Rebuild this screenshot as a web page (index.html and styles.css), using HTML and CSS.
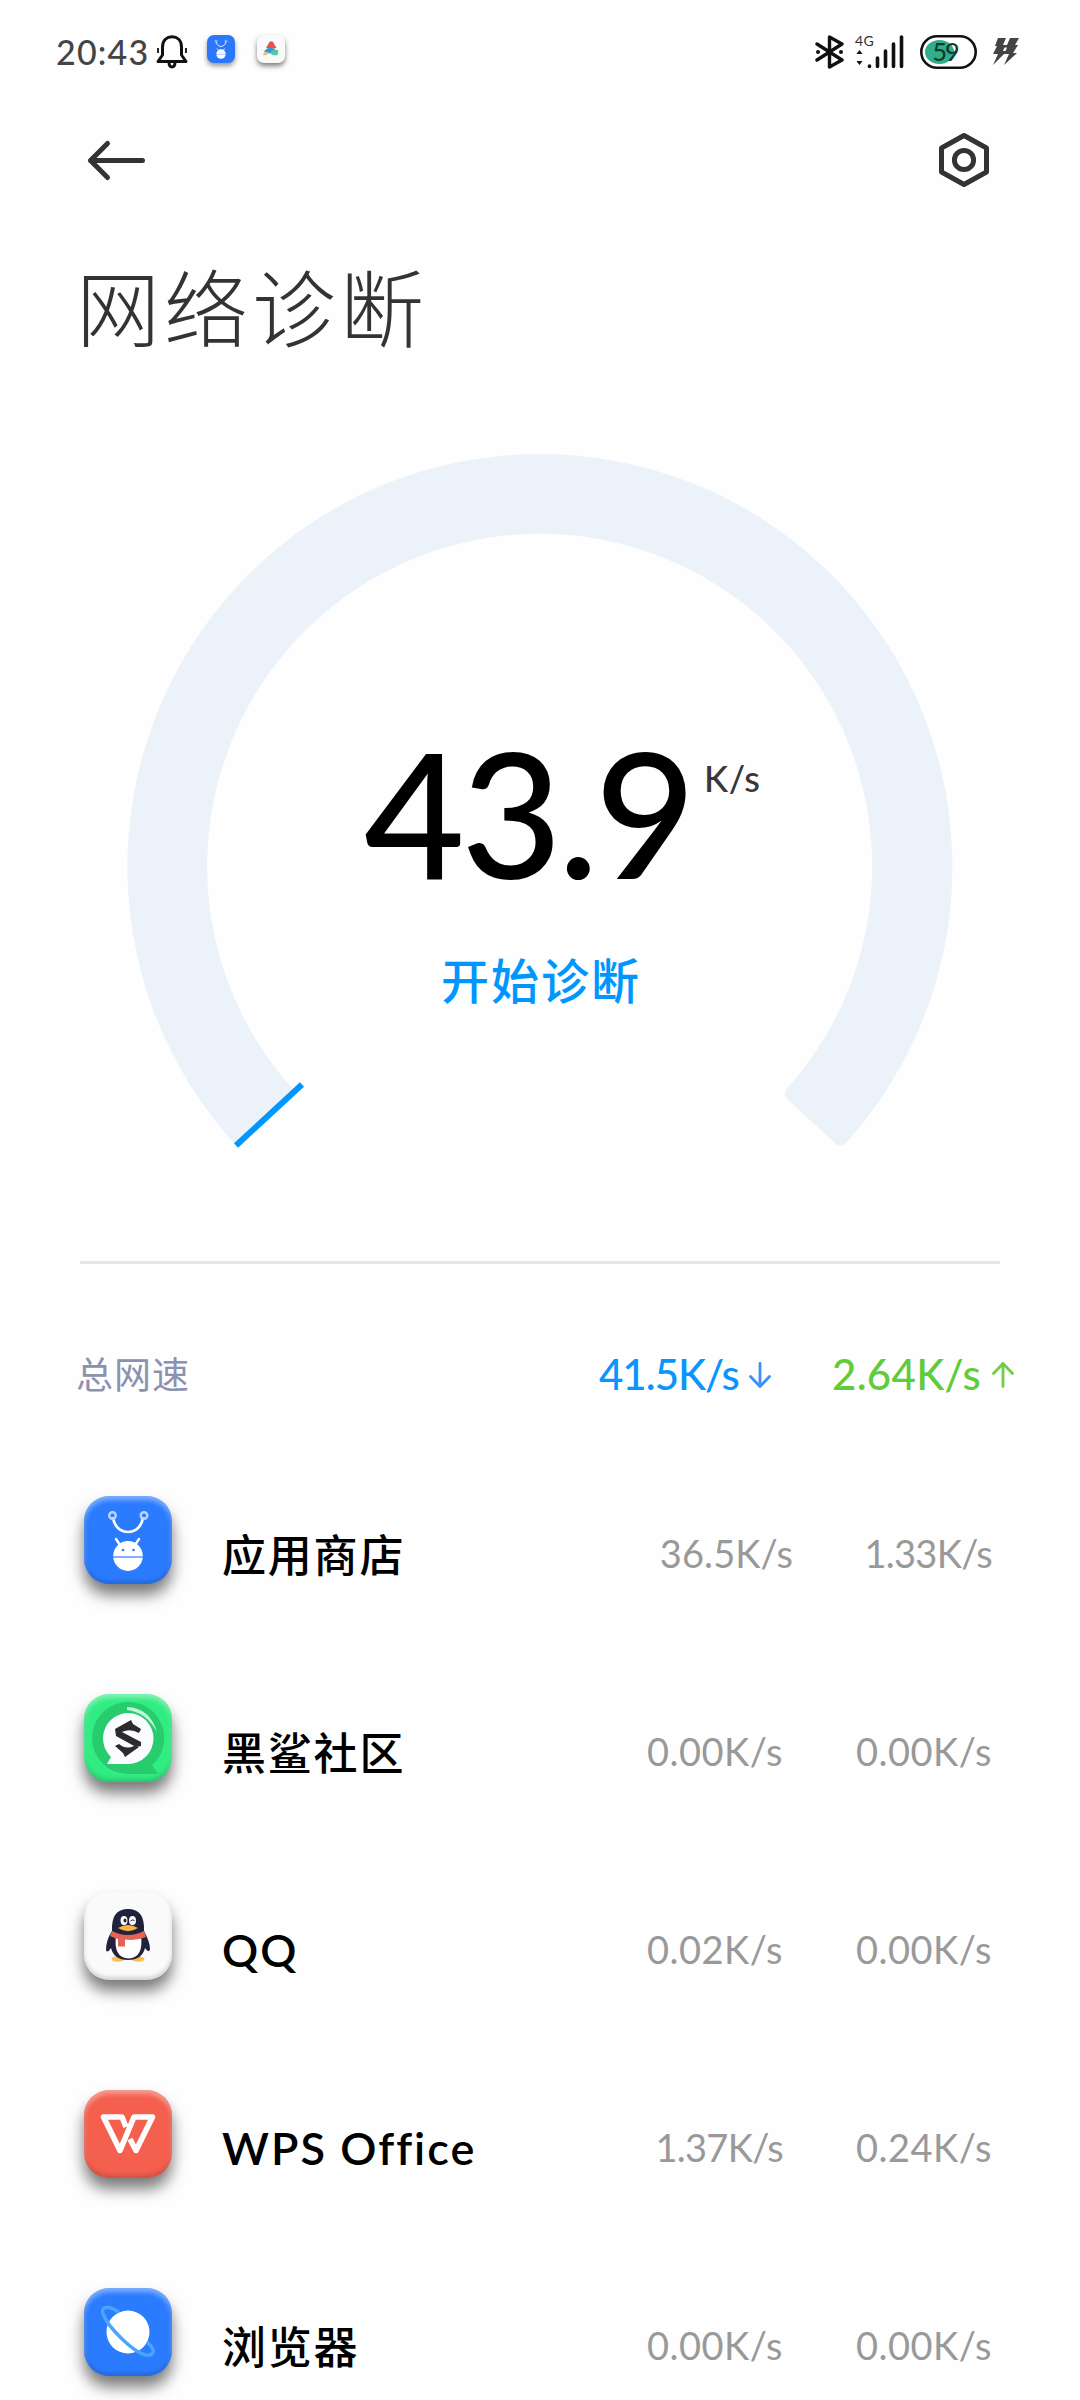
FILE: index.html
```html
<!DOCTYPE html>
<html lang="zh-CN">
<head>
<meta charset="utf-8">
<title>网络诊断</title>
<link rel="stylesheet" href="styles.css">
</head>
<body>
<svg class="defs" width="0" height="0" aria-hidden="true">
  <defs>
    <symbol id="store" viewBox="0 0 88 88">
      <g fill="none" stroke="#fff">
        <path d="M29 21C31 41 57 41 59 21" stroke-width="2.6"/>
        <circle cx="28.500" cy="19.500" r="3.300" stroke="#bcd5ff" stroke-width="2.400"/>
        <circle cx="60" cy="19.500" r="3.300" stroke="#bcd5ff" stroke-width="2.400"/>
        <path d="M32 43l4 6M55 43l-4 6" stroke-width="2.400" stroke-linecap="round"/>
      </g>
      <ellipse cx="44" cy="60" rx="14.800" ry="15" fill="#fff"/>
      <path d="M28 61h32" stroke="#2b7bff" stroke-width="1.200"/>
      <circle cx="39" cy="54" r="1.300" fill="#2b7bff"/><circle cx="49.500" cy="54" r="1.300" fill="#2b7bff"/>
    </symbol>
  </defs>
</svg>

<header class="status">
  <span class="clock">20:43</span>
  <svg class="bell" viewBox="0 0 32 34" width="32" height="34" fill="none" stroke="#111" stroke-width="3">
    <path d="M6.500 20V12C6.500 5 11 1.800 16 1.800S25.500 5 25.500 12v8l4.500 6.500H2z" stroke-linejoin="round"/>
    <path d="M13 27c0 6.500 6 6.500 6 0"/>
    <path d="M2 13v5M30 13v5" stroke-width="1.800"/>
  </svg>
  <span class="mini mini-blue"><svg viewBox="0 0 88 88" width="28" height="28"><use href="#store"/></svg></span>
  <span class="mini mini-white">
    <svg viewBox="0 0 28 28" width="28" height="28">
      <path d="M9 13l3.500-6q2-1.500 3.500 0l3.500 6-5 1z" fill="#e6534f"/>
      <path d="M7 17q2-4 6-4 5 0 6 3l-3 3-5-1z" fill="#2f9be0"/>
      <path d="M13 18q3-4 8-3 1 5-2 5.500-4 0-6-2.500z" fill="#52cda0"/>
      <path d="M6 20q0-3 5-3 0 4-5 3z" fill="#f5bd4a"/>
    </svg>
  </span>
  <span class="spacer"></span>
  <svg class="bt" viewBox="0 0 30 34" width="30" height="34">
    <path d="M2 9l25 16-12.500 7V2L27 9 2 25" fill="none" stroke="#111" stroke-width="3.400" stroke-linejoin="round" stroke-linecap="round"/>
    <circle cx="3" cy="17" r="2" fill="#111"/><circle cx="26" cy="17" r="2" fill="#111"/>
  </svg>
  <svg class="signal" viewBox="0 0 52 36" width="52" height="36">
    <text x="0" y="12" class="net">4G</text>
    <path d="M1.500 20L4.500 16 7.500 20zM1.500 27L4.500 31 7.500 27z" fill="#111"/>
    <path d="M14.500 32v.5M22.500 24v8.500M30.500 17v15.500M38.500 10v22.500M46.500 3v29.500" stroke="#111" stroke-width="3.600" stroke-linecap="round"/>
  </svg>
  <svg class="battery" viewBox="0 0 58 34" width="58" height="34">
    <rect x="1.300" y="1.300" width="54.400" height="31.400" rx="15.700" fill="none" stroke="#111" stroke-width="2.600"/>
    <ellipse cx="19.500" cy="17" rx="14.500" ry="12" fill="#2fae8b"/>
    <text x="12.500" y="25.500" class="level">59</text>
  </svg>
  <svg class="bolt" viewBox="0 0 28 30" width="28" height="30" fill="#444">
    <path d="M6 1h8l-3 7h4l3-7h9l-4 7h3l-5 8h4L12 28l5-11h-5L1 28 6 17H1L5 9H3z"/>
    <path d="M12.500 10.500h2.500l-1.500 3.500h-2.500z" fill="#fefefe"/>
  </svg>
</header>

<nav class="toolbar">
  <svg viewBox="0 0 60 44" width="60" height="44" fill="none" stroke="#333" stroke-width="5" stroke-linecap="round" stroke-linejoin="round">
    <path d="M56.500 22.500H4.500M21.500 5.500L4.500 22.500 21.500 39.500"/>
  </svg>
  <svg viewBox="0 0 50 56" width="50" height="56" fill="none" stroke="#333" stroke-width="5" stroke-linejoin="round">
    <path d="M25 3.500L47.500 16v24L25 52.500 2.500 40V16z"/>
    <circle cx="25" cy="28" r="9.600"/>
  </svg>
</nav>

<h1 class="title">网络诊断</h1>

<section class="gauge">
  <svg class="dial" viewBox="0 0 840 720" width="840" height="720">
    <path d="M117 706.500A412.500 412.500 0 1 1 726 703Q721 708.500 716 704L667.500 659.500Q663 655 667 648.500A332.500 332.500 0 1 0 175.500 652Z" fill="#ebf2f9"/>
    <path d="M116 705.500L182 644.500" stroke="#0096ff" stroke-width="6"/>
  </svg>
  <div class="readout">
    <div class="speed"><span class="num">43.9</span><span class="unit">K/s</span></div>
    <div class="start">开始诊断</div>
  </div>
</section>

<hr class="rule">

<section class="total">
  <span class="total-label">总网速</span>
  <span class="total-value down">41.5K/s</span>
  <svg class="arrow" viewBox="0 0 22 26" width="22" height="26" fill="none" stroke="#3f8ff5" stroke-width="2.800" stroke-linecap="round" stroke-linejoin="round"><path d="M11 1.500v23M1.500 14.500L11 24.500l9.500-10"/></svg>
  <span class="total-value up">2.64K/s</span>
  <svg class="arrow" viewBox="0 0 22 26" width="22" height="26" fill="none" stroke="#6fce45" stroke-width="2.800" stroke-linecap="round" stroke-linejoin="round"><path d="M11 24.500v-23M1.500 11.500L11 1.500l9.500 10"/></svg>
</section>

<ul class="apps">
  <li class="app">
    <span class="icon blue"><svg viewBox="0 0 88 88" width="88" height="88"><use href="#store"/></svg></span>
    <span class="name">应用商店</span>
    <span class="rate rate-down wide">36.5K/s</span>
    <span class="rate rate-up narrow">1.33K/s</span>
  </li>
  <li class="app">
    <span class="icon green">
      <svg viewBox="0 0 88 88" width="88" height="88">
        <path d="M44 8A36 36 0 1 0 44 80H74L68 71A36 36 0 0 0 44 8z" fill="#27cc6c"/>
        <path d="M44 19A25.500 25.500 0 1 1 44 70H23L27 63A25.500 25.500 0 0 1 44 19z" fill="#fbfcff"/>
        <path d="M43 13Q66 14 73 38Q62 18 43 16z" fill="#c5f5da"/>
        <path d="M31 35L47 26 49 30 57 35 55 39Q46 34 38 38L57 48V52L52 53 32 42z" fill="#2b2b2d"/>
        <path d="M31 52L35 50Q42 56 50 52L55 53 41 63 39 59z" fill="#2b2b2d"/>
      </svg>
    </span>
    <span class="name">黑鲨社区</span>
    <span class="rate rate-down">0.00K/s</span>
    <span class="rate rate-up">0.00K/s</span>
  </li>
  <li class="app">
    <span class="icon white">
      <svg viewBox="0 0 88 88" width="88" height="88">
        <ellipse cx="34" cy="67" rx="6.500" ry="2.800" fill="#fbbd55"/><ellipse cx="54" cy="67" rx="6.500" ry="2.800" fill="#fbbd55"/>
        <path d="M28 39Q27 17 44 17T60 39Q66 50 66 57 65 62 61 56 58 68 44 68T27 56Q23 62 22 58 22 48 28 39z" fill="#20213a"/>
        <path d="M32 43Q44 50 57 43 60 66 44.500 66.500 29 66 32 43z" fill="#fff"/>
        <path d="M28 39Q44 47 60 39L62 45Q53 49 41 47.500V54.500H34V47Q30 46 26 44z" fill="#e36355"/>
        <ellipse cx="40" cy="28.500" rx="3.500" ry="4.500" fill="#fff"/><ellipse cx="48.500" cy="28.500" rx="3.500" ry="4.500" fill="#fff"/>
        <ellipse cx="41" cy="28.500" rx="1.500" ry="2" fill="#20213a"/><path d="M46.500 29q2-2 4-.5" stroke="#20213a" fill="none"/>
        <path d="M34 36Q44 30 54 36 44 42.500 34 36z" fill="#fbb347"/>
      </svg>
    </span>
    <span class="name latin">QQ</span>
    <span class="rate rate-down">0.02K/s</span>
    <span class="rate rate-up">0.00K/s</span>
  </li>
  <li class="app">
    <span class="icon red">
      <svg viewBox="0 0 88 88" width="88" height="88" fill="none" stroke="#fff" stroke-width="5.600" stroke-linejoin="round">
        <path d="M42 37L38 27H19.500L36 60.500 50 27H68.500L52 60.500 46 49"/>
      </svg>
    </span>
    <span class="name latin">WPS Office</span>
    <span class="rate rate-down narrow">1.37K/s</span>
    <span class="rate rate-up">0.24K/s</span>
  </li>
  <li class="app">
    <span class="icon blue">
      <svg viewBox="0 0 88 88" width="88" height="88">
        <circle cx="44" cy="44" r="21.500" fill="#fff"/>
        <path d="M35 24C24 17 15 18 20 28C25 40 50 65 62 67C72 68 71 61 63 54" fill="none" stroke="#4ba6fb" stroke-width="3.400"/>
      </svg>
    </span>
    <span class="name">浏览器</span>
    <span class="rate rate-down">0.00K/s</span>
    <span class="rate rate-up">0.00K/s</span>
  </li>
</ul>
</body>
</html>
```
FILE: styles.css
```css
* { box-sizing: border-box; }

body {
  margin: 0;
  width: 1080px;
  height: 2400px;
  overflow: hidden;
  background: #fefefe;
  color: #000;
  font-family: Lato, "Noto Sans CJK SC", sans-serif;
}

.defs { display: block; }

/* Status bar */
.status {
  display: flex;
  align-items: center;
  height: 104px;
  padding: 0 60px 0 56px;
}
.clock {
  width: 100px;
  font-size: 34px;
  font-weight: 500;
  line-height: 40px;
  letter-spacing: 1.2px;
  color: #444;
}
.bell { margin-right: 19px; }
.mini {
  width: 28px;
  height: 28px;
  margin: -7px 22px 0 0;
  border-radius: 7px;
}
.mini svg { display: block; }
.mini-blue { background: #2b78fb; box-shadow: 0 3px 5px rgba(0, 0, 0, .4); }
.mini-white { background: #fafafa; box-shadow: 0 3px 5px rgba(0, 0, 0, .5); }
.spacer { flex: 1; }
.bt { margin-right: 10px; }
.signal { margin-right: 13px; overflow: visible; }
.net { font-size: 14px; fill: #333; letter-spacing: .5px; }
.level { font-size: 25px; font-weight: 500; fill: #10382c; letter-spacing: -2px; }
.battery { margin-right: 14px; }

/* Toolbar and page title */
.toolbar {
  display: flex;
  align-items: center;
  justify-content: space-between;
  height: 112px;
  padding: 0 91px 0 86px;
}
.title {
  margin: 43px 0 0 76px;
  height: 99px;
  font-size: 84px;
  font-weight: 300;
  line-height: 100px;
  letter-spacing: 4px;
  color: #333;
}

/* Speed gauge */
.gauge {
  display: grid;
  width: 840px;
  height: 720px;
  margin: 82px 0 0 120px;
}
.dial, .readout { grid-area: 1 / 1; }
.readout { padding-top: 272px; }
.speed {
  display: flex;
  align-items: flex-start;
  height: 200px;
  padding-left: 244px;
}
.num {
  width: 340px;
  font-size: 174px;
  font-weight: 500;
  line-height: 200px;
  letter-spacing: -4px;
  white-space: nowrap;
}
.unit {
  margin-top: 44px;
  font-size: 36px;
  font-weight: 500;
  line-height: 44px;
  letter-spacing: .6px;
  color: #383838;
}
.start {
  margin-top: 39px;
  padding-left: 2px;
  font-size: 48px;
  font-weight: 500;
  line-height: 60px;
  letter-spacing: 2px;
  text-align: center;
  color: #0096ff;
}

.rule {
  width: 920px;
  height: 3px;
  margin: 101px 80px 0;
  border: 0;
  background: #e6e7e6;
}

/* Total throughput */
.total {
  display: flex;
  align-items: center;
  height: 177px;
  padding-left: 76px;
  padding-top: 44px;
}
.total-label {
  flex: 0 0 523px;
  padding-bottom: 4px;
  font-size: 37px;
  letter-spacing: 1px;
  color: #8b91b0;
}
.total-value {
  padding-bottom: 1px;
  font-size: 42px;
  font-weight: 500;
  line-height: 50px;
  white-space: nowrap;
}
.down { width: 150px; letter-spacing: -1px; color: #0a95fb; }
.up { width: 160px; margin-left: 61px; letter-spacing: .3px; color: #62cb3a; }

/* Application list */
.apps { margin: 0; padding: 0; list-style: none; }
.app {
  display: grid;
  grid-template-columns: 88px 1fr auto 209px;
  align-items: center;
  height: 198px;
  padding: 0 88px 0 84px;
}
.icon {
  width: 88px;
  height: 88px;
  border-radius: 25px;
  box-shadow: 0 11px 15px rgba(0, 0, 0, .52), inset 0 4px 5px rgba(255, 255, 255, .4), inset 0 -3px 4px rgba(0, 0, 0, .16);
}
.icon svg { display: block; }
.blue { background: #2b7bff; }
.green { background: #31ec83; }
.white { background: #fafafa; }
.red { background: #f45f4e; }
.name {
  padding: 29px 0 0 50px;
  font-size: 44px;
  font-weight: 500;
  line-height: 54px;
  letter-spacing: 1.8px;
}
.latin {
  padding-top: 27px;
  font-size: 45px;
  font-weight: 600;
  letter-spacing: 2px;
}
.rate {
  padding-top: 26px;
  font-size: 38px;
  line-height: 46px;
  letter-spacing: .5px;
  text-align: right;
  color: #999;
}
.narrow { letter-spacing: -.7px; }
.wide { margin-right: -10px; letter-spacing: .1px; }
```
